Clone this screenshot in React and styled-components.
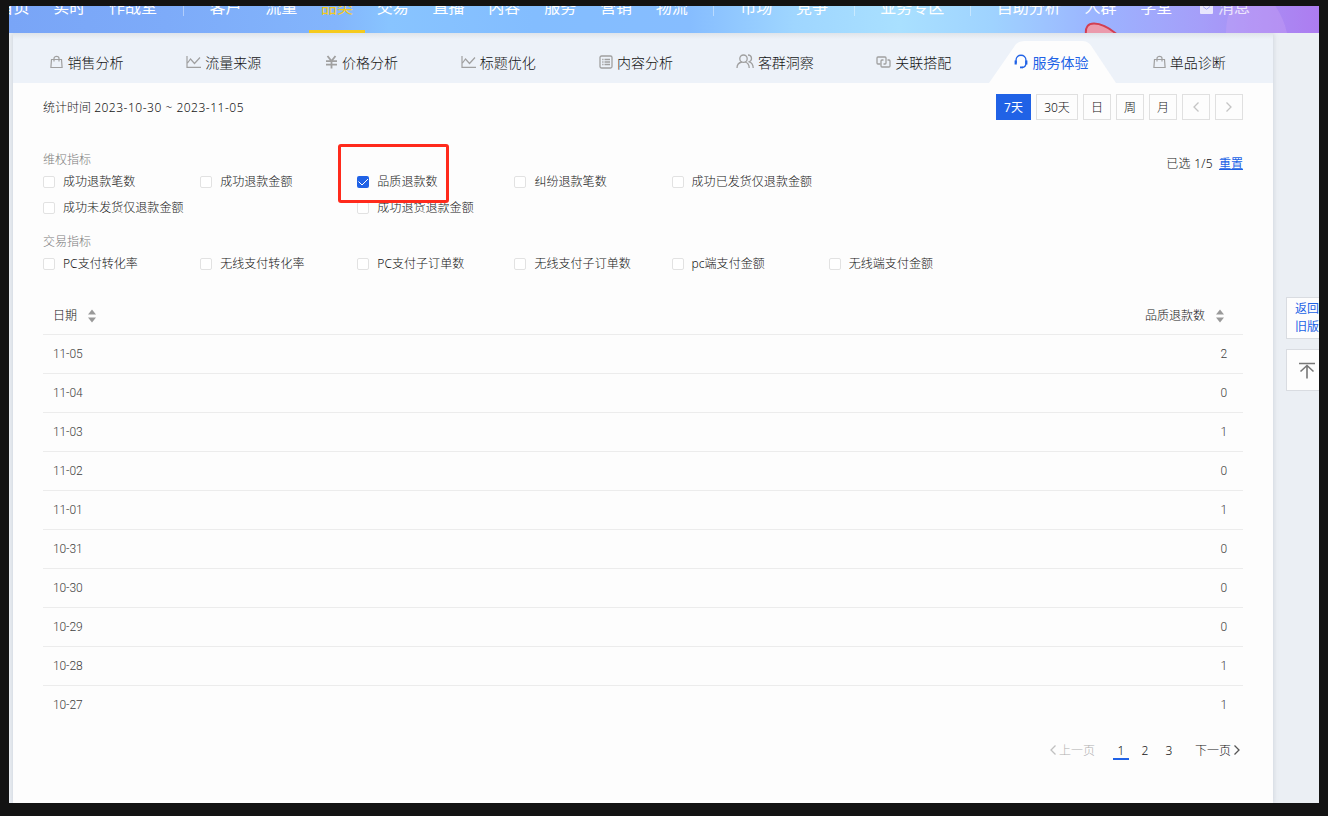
import React, { useState } from "react";
import styled, { createGlobalStyle, css } from "styled-components";

const colors = {
    primary: "#2062e6",
    text: "#141414",
    muted: "#7c7c7c",
    line: "#ececec",
    panel: "#fdfdfd"
};

const GlobalStyle = createGlobalStyle`
    * {
        box-sizing: border-box;
    }

    body {
        margin: 0;
        background: #131313;
        color: ${colors.text};
        font-family: "Noto Sans", "Noto Sans CJK SC", sans-serif;
        font-size: 12px;
        font-weight: 300;
        overflow: hidden;
    }
`;

const Frame = styled.div`
    width: 1328px;
    height: 816px;
    padding: 6px 9px 13px;
    background: #131313;
`;

const Screen = styled.div`
    position: relative;
    height: 797px;
    overflow: hidden;
    background: #ebeff4;
`;

const TopBar = styled.header`
    position: relative;
    z-index: 1;
    height: 27px;
    overflow: hidden;
    background: linear-gradient(
        90deg,
        #79a5f7 0%,
        #7dabf9 12%,
        #83b5fc 25%,
        #88c4ff 29%,
        #83bdff 40%,
        #86bdff 52%,
        #9fd6ff 60%,
        #a9e0ff 68%,
        #9fd3ff 75%,
        #9bb4ff 83%,
        #a59ef9 91%,
        #ad7cf0 100%
    );
`;

const Decoration = styled.svg`
    position: absolute;
    top: 0;
    right: 0;
`;

const Nav = styled.nav`
    position: relative;
    display: flex;
    height: 27px;
    margin-left: -23.5px;
`;

const NavItem = styled.a`
    display: flex;
    flex: none;
    align-items: center;
    gap: 5px;
    height: 27px;
    margin-left: ${props => (props.$faded ? 4 : 0)}px;
    padding: 0 11.9px 21px;
    border-bottom: 3px solid ${props => (props.$active ? "#f5ca1d" : "transparent")};
    color: ${props => (props.$active ? "#f5ca1d" : "#fff")};
    font-size: 16px;
    font-weight: 400;
    line-height: 24px;
    white-space: nowrap;
    opacity: ${props => (props.$faded ? 0.75 : 1)};
`;

const NavText = styled.span`
    margin-top: -1px;
`;

const NavDivider = styled.i`
    flex: none;
    width: 1px;
    height: 10px;
    margin: 0 13.8px;
    background: rgba(255, 255, 255, 0.4);
`;

const Panel = styled.main`
    width: 1260px;
    height: 770px;
    margin-left: 4px;
    background: ${colors.panel};
    box-shadow: 0 0 5px rgba(100, 110, 130, 0.25);
`;

const Tabs = styled.div`
    display: flex;
    height: 50px;
    padding: 0 15px 0 5px;
    background: linear-gradient(#dfe4ea 0, #edf2f9 6px);
`;

const Tab = styled.div`
    position: relative;
    display: flex;
    flex: none;
    align-items: center;
    justify-content: center;
    width: 137.8px;
    padding: 8px ${props => props.$inset || 0}px 0 0;
    color: ${props => (props.$active ? colors.primary : colors.text)};
    font-size: 14px;
    font-weight: ${props => (props.$active ? 400 : 300)};
    white-space: nowrap;
`;

const TabShape = styled.svg`
    position: absolute;
    left: 6px;
    bottom: 0;
`;

const TabLabel = styled.span`
    position: relative;
    display: flex;
    align-items: center;
    gap: 4px;

    svg {
        flex: none;
        margin-top: -1px;
        color: ${props => (props.$active ? colors.primary : "#a0a0a0")};
    }
`;

const Content = styled.div`
    padding: 11px 30px 0;
`;

const Toolbar = styled.div`
    display: flex;
    align-items: center;
    justify-content: space-between;
    height: 26px;
`;

const Dates = styled.span`
    letter-spacing: 0.51px;
`;

const ButtonGroup = styled.div`
    display: flex;
    gap: 5px;
`;

const RangeButton = styled.button`
    display: flex;
    align-items: center;
    justify-content: center;
    width: ${props => props.$width || 28}px;
    height: 26px;
    padding: 0;
    border: 1px solid ${props => (props.$active ? colors.primary : "#e0e0e0")};
    background: ${props => (props.$active ? colors.primary : colors.panel)};
    color: ${props => (props.$active ? "#fff" : colors.text)};
    font-family: inherit;
    font-size: 12px;
    font-weight: ${props => (props.$active ? 400 : 300)};

    svg {
        color: #c4c4c4;
    }
`;

const Metrics = styled.section`
    display: flex;
    justify-content: space-between;
    margin-top: 30px;
`;

const MetricGroup = styled.div`
    margin-bottom: 10px;
`;

const GroupTitle = styled.div`
    height: 19px;
    color: ${colors.muted};
    line-height: 19px;

    ${MetricGroup} + ${MetricGroup} & {
        height: 20px;
        line-height: 21px;
    }
`;

const MetricGrid = styled.div`
    display: grid;
    grid-template-columns: repeat(6, 157.15px);
    grid-auto-rows: 26px;
`;

const Metric = styled.label`
    display: flex;
    grid-column: span ${props => props.$span || 1};
    align-items: center;
    gap: 8px;
    white-space: nowrap;
`;

const MetricName = styled.span`
    margin-top: -2px;
    letter-spacing: 0.05px;
`;

const Box = styled.span`
    display: flex;
    width: 12px;
    height: 12px;
    border: 1px solid #e2e2e2;
    border-radius: 2px;
    background: #fff;

    ${props =>
        props.$checked &&
        css`
            border: none;
            background: ${colors.primary};
        `}
`;

const Selected = styled.div`
    display: flex;
    gap: 6px;
    height: 20px;
    margin-top: 4px;
    line-height: 20px;
`;

const SelectedCount = styled.span`
    letter-spacing: 0.3px;
`;

const Reset = styled.a`
    color: ${colors.primary};
    font-weight: 400;
    text-decoration: underline;
`;

const Table = styled.div`
    margin-top: 9px;
`;

const Row = styled.div`
    display: flex;
    align-items: center;
    justify-content: space-between;
    height: 39px;
    padding: 0 16px 0 10px;
    border-bottom: 1px solid ${props => (props.$last ? "transparent" : colors.line)};
    color: #404040;
    font-family: Roboto, "Noto Sans CJK SC", sans-serif;
    letter-spacing: -0.1px;
`;

const HeadRow = styled(Row)`
    padding-right: 19px;
    color: ${colors.text};
    letter-spacing: 0;
`;

const HeadCell = styled.div`
    display: flex;
    align-items: center;
    gap: 11px;
    margin-top: -1px;

    svg {
        margin-top: 3px;
    }
`;

const Pager = styled.div`
    display: flex;
    align-items: center;
    justify-content: flex-end;
    height: 20px;
    margin-top: 15px;
    padding-right: 3px;
`;

const PageStep = styled.span`
    display: flex;
    align-items: center;
    gap: 3px;
    color: ${props => (props.$disabled ? "#b0b0b0" : colors.text)};

    svg {
        color: ${props => (props.$disabled ? "#c0c0c0" : "#555")};
    }
`;

const PageNumbers = styled.div`
    display: flex;
    gap: 8px;
    margin: 0 18px;
`;

const PageNumber = styled.span`
    width: 16px;
    height: 20px;
    border-bottom: 2px solid ${props => (props.$active ? colors.primary : "transparent")};
    line-height: 21px;
    text-align: center;
`;

const Highlight = styled.div`
    position: absolute;
    top: 138px;
    left: 329px;
    width: 111px;
    height: 59px;
    border: 3px solid #ff2a1c;
    border-radius: 3px;
    pointer-events: none;
`;

const SideTools = styled.aside`
    position: absolute;
    top: 291px;
    left: 1277px;
    display: flex;
    flex-direction: column;
    gap: 10px;
`;

const SideButton = styled.div`
    display: flex;
    align-items: center;
    justify-content: center;
    width: 42px;
    height: 42px;
    padding: 0 8px;
    border: 1px solid #d9dce1;
    background: ${colors.panel};
    color: ${colors.primary};
    font-weight: 400;
    line-height: 18px;

    svg {
        flex: none;
    }
`;

function BagIcon() {
    return (
        <svg width="13" height="14" viewBox="0 0 13 14" fill="none" stroke="currentColor" strokeWidth="1.2">
            <path d="M1.5 4.5h10l.6 8H.9zM4 6.5V3.4C4 .8 9 .8 9 3.4v3.1" />
        </svg>
    );
}

function TrendIcon() {
    return (
        <svg width="15" height="14" viewBox="0 0 15 14" fill="none" stroke="currentColor" strokeWidth="1.2">
            <path d="M1 1v11.4h14M1.5 8L4.5 4l4 4.5 5.500-6" />
        </svg>
    );
}

function YuanIcon() {
    return (
        <svg width="13" height="14" viewBox="0 0 13 14" fill="none" stroke="currentColor" strokeWidth="1.8">
            <path d="M2.5 1l4 5 4-5M1 6.2h11M1 9.6h11M6.5 6v7.5" />
        </svg>
    );
}

function ListIcon() {
    return (
        <svg width="14" height="14" viewBox="0 0 14 14" fill="none" stroke="currentColor" strokeWidth="1.3">
            <rect x="1" y="1" width="12" height="12" rx="1.5" />
            <path d="M3.2 4.5h1.3M5.5 4.5H11M3.2 7h1.3M5.5 7H11M3.2 9.5h1.3M5.5 9.5H11" />
        </svg>
    );
}

function PeopleIcon() {
    return (
        <svg width="18" height="15" viewBox="0 0 18 15" fill="none" stroke="currentColor" strokeWidth="1.3">
            <circle cx="7.5" cy="4.7" r="3.7" />
            <path d="M1 14c0-3.500 2-5.400 4.900-6M9.200 8c2.600.8 4 2.600 4 6M12 1c4.200 0 4.600 5.600 1.300 6.800 2.500 1 3.900 2.900 3.900 6.200" />
        </svg>
    );
}

function LinkIcon() {
    return (
        <svg width="15" height="14" viewBox="0 0 15 14" fill="none" stroke="currentColor" strokeWidth="1.3">
            <path d="M4.500 9H2a1 1 0 0 1-1-1V3a1 1 0 0 1 1-1h7a1 1 0 0 1 1 1v5a1 1 0 0 1-1 1H7.500" />
            <path d="M11.500 5H13a1 1 0 0 1 1 1v5a1 1 0 0 1-1 1H6a1 1 0 0 1-1-1V6a1 1 0 0 1 1-1h1.500" />
        </svg>
    );
}

function HeadsetIcon() {
    return (
        <svg width="14" height="15" viewBox="0 0 14 15" fill="none" stroke="currentColor" strokeWidth="1.300">
            <path d="M2 9V6.500C2-.5 12-.5 12 6.500V9c0 2.800-1.500 4.300-4 4.500" />
            <path d="M1.700 6.500v4M12.300 6.500v4" strokeWidth="2.200" />
            <path d="M6 13.400h2.800" strokeWidth="1.800" />
        </svg>
    );
}

function Chevron({ direction }) {
    return (
        <svg width="6" height="12" viewBox="0 0 6 12" fill="none" stroke="currentColor" strokeWidth="1.300">
            <path d={direction === "left" ? "M5.500 1.500L1 6l4.500 4.500" : "M.5 1.500L5 6 .5 10.500"} />
        </svg>
    );
}

function SortIcon() {
    return (
        <svg width="8" height="14" viewBox="0 0 8 14" fill="#999">
            <path d="M4 .5l4 5H0zM4 13.500l4-5H0z" />
        </svg>
    );
}

function MailIcon() {
    return (
        <svg width="13" height="12" viewBox="0 0 13 12" fill="none">
            <rect width="13" height="12" rx="1" fill="#fff" />
            <path d="M3 4.500l3.500 2.800L10 4.500" stroke="#a8adfa" />
        </svg>
    );
}

function TopIcon() {
    return (
        <svg width="16" height="17" viewBox="0 0 16 17" fill="none" stroke="#777" strokeWidth="1.600">
            <path d="M0 1.500h16M8 16.500V4M1.500 9.500L8 3.500l6.500 6" />
        </svg>
    );
}

const navItems = [
    "首页", "实时", "作战室", null,
    "客户", "流量", "品类", "交易", "直播", "内容", "服务", "营销", "物流", null,
    "市场", "竞争", null,
    "业务专区", null,
    "自助分析", "人群", "学堂"
];

const tabs = [
    { name: "销售分析", icon: BagIcon },
    { name: "流量来源", icon: TrendIcon, inset: 2 },
    { name: "价格分析", icon: YuanIcon, inset: 2 },
    { name: "标题优化", icon: TrendIcon, inset: 4 },
    { name: "内容分析", icon: ListIcon, inset: 4 },
    { name: "客群洞察", icon: PeopleIcon, inset: 2 },
    { name: "关联搭配", icon: LinkIcon },
    { name: "服务体验", icon: HeadsetIcon },
    { name: "单品诊断", icon: BagIcon }
];

const metricGroups = [
    {
        title: "维权指标",
        items: [
            { name: "成功退款笔数" },
            { name: "成功退款金额" },
            { name: "品质退款数" },
            { name: "纠纷退款笔数" },
            { name: "成功已发货仅退款金额", span: 2 },
            { name: "成功未发货仅退款金额", span: 2 },
            { name: "成功退货退款金额", span: 2 }
        ]
    },
    {
        title: "交易指标",
        items: [
            { name: "PC支付转化率" },
            { name: "无线支付转化率" },
            { name: "PC支付子订单数" },
            { name: "无线支付子订单数" },
            { name: "pc端支付金额" },
            { name: "无线端支付金额" }
        ]
    }
];

const rows = [
    ["11-05", 2],
    ["11-04", 0],
    ["11-03", 1],
    ["11-02", 0],
    ["11-01", 1],
    ["10-31", 0],
    ["10-30", 0],
    ["10-29", 0],
    ["10-28", 1],
    ["10-27", 1]
];

const ranges = [
    { name: "7天", width: 35 },
    { name: "30天", width: 42 },
    { name: "日" },
    { name: "周" },
    { name: "月" }
];

function App() {
    const [range, setRange] = useState("7天");
    const [tab, setTab] = useState("服务体验");

    return (
        <Frame>
            <GlobalStyle />
            <Screen>
                <TopBar>
                    <Decoration width="250" height="27" viewBox="0 0 250 27">
                        <path d="M157 27C157 14 160 4 166-6h36c8 10 13 20 16 33z" fill="#d0a8f4" opacity=".3" />
                        <path d="M16.500 29c-.5-8 2-11.500 8-11.500 8 0 16 5 23 11.500z" fill="#eb9aac" />
                        <path d="M17 29c-1-8 2-11.500 8-11.500 8 0 15 4 23 11" fill="none" stroke="#d23f52" strokeWidth="2" />
                    </Decoration>
                    <Nav>
                        {navItems.map((item, index) =>
                            item ? (
                                <NavItem key={item} $active={item === "品类"}>
                                    <NavText>{item}</NavText>
                                </NavItem>
                            ) : (
                                <NavDivider key={index} />
                            )
                        )}
                        <NavItem $faded>
                            <MailIcon />
                            <NavText>消息</NavText>
                        </NavItem>
                    </Nav>
                </TopBar>
                <Panel>
                    <Tabs>
                        {tabs.map(({ name, icon: Icon, inset }) => (
                            <Tab key={name} $active={name === tab} $inset={inset} onClick={() => setTab(name)}>
                                {name === tab && (
                                    <TabShape width="128" height="42" viewBox="0 0 128 42">
                                        <path
                                            d="M0 42L25 6C28 1 31 0 36 0h56c5 0 8 1 11 6l24 36z"
                                            fill={colors.panel}
                                        />
                                    </TabShape>
                                )}
                                <TabLabel $active={name === tab}>
                                    <Icon />
                                    {name}
                                </TabLabel>
                            </Tab>
                        ))}
                    </Tabs>
                    <Content>
                        <Toolbar>
                            <span>
                                统计时间 <Dates>2023-10-30 ~ 2023-11-05</Dates>
                            </span>
                            <ButtonGroup>
                                {ranges.map(({ name, width }) => (
                                    <RangeButton
                                        key={name}
                                        $width={width}
                                        $active={name === range}
                                        onClick={() => setRange(name)}
                                    >
                                        {name}
                                    </RangeButton>
                                ))}
                                <RangeButton>
                                    <Chevron direction="left" />
                                </RangeButton>
                                <RangeButton>
                                    <Chevron direction="right" />
                                </RangeButton>
                            </ButtonGroup>
                        </Toolbar>
                        <Metrics>
                            <div>
                                {metricGroups.map(group => (
                                    <MetricGroup key={group.title}>
                                        <GroupTitle>{group.title}</GroupTitle>
                                        <MetricGrid>
                                            {group.items.map(({ name, span }) => (
                                                <Metric key={name} $span={span}>
                                                    <Box $checked={name === "品质退款数"}>
                                                        {name === "品质退款数" && (
                                                            <svg width="12" height="12" fill="none" stroke="#fff">
                                                                <path d="M1.500 5.500L5 9l6-6" />
                                                            </svg>
                                                        )}
                                                    </Box>
                                                    <MetricName>{name}</MetricName>
                                                </Metric>
                                            ))}
                                        </MetricGrid>
                                    </MetricGroup>
                                ))}
                            </div>
                            <Selected>
                                <SelectedCount>已选 1/5</SelectedCount>
                                <Reset>重置</Reset>
                            </Selected>
                        </Metrics>
                        <Table>
                            <HeadRow>
                                <HeadCell>
                                    日期 <SortIcon />
                                </HeadCell>
                                <HeadCell>
                                    品质退款数 <SortIcon />
                                </HeadCell>
                            </HeadRow>
                            {rows.map(([date, count], index) => (
                                <Row key={date} $last={index === rows.length - 1}>
                                    <span>{date}</span>
                                    <span>{count}</span>
                                </Row>
                            ))}
                        </Table>
                        <Pager>
                            <PageStep $disabled>
                                <Chevron direction="left" />
                                上一页
                            </PageStep>
                            <PageNumbers>
                                <PageNumber $active>1</PageNumber>
                                <PageNumber>2</PageNumber>
                                <PageNumber>3</PageNumber>
                            </PageNumbers>
                            <PageStep>
                                下一页
                                <Chevron direction="right" />
                            </PageStep>
                        </Pager>
                    </Content>
                </Panel>
                <SideTools>
                    <SideButton>返回旧版</SideButton>
                    <SideButton>
                        <TopIcon />
                    </SideButton>
                </SideTools>
                <Highlight />
            </Screen>
        </Frame>
    );
}

export default App;
